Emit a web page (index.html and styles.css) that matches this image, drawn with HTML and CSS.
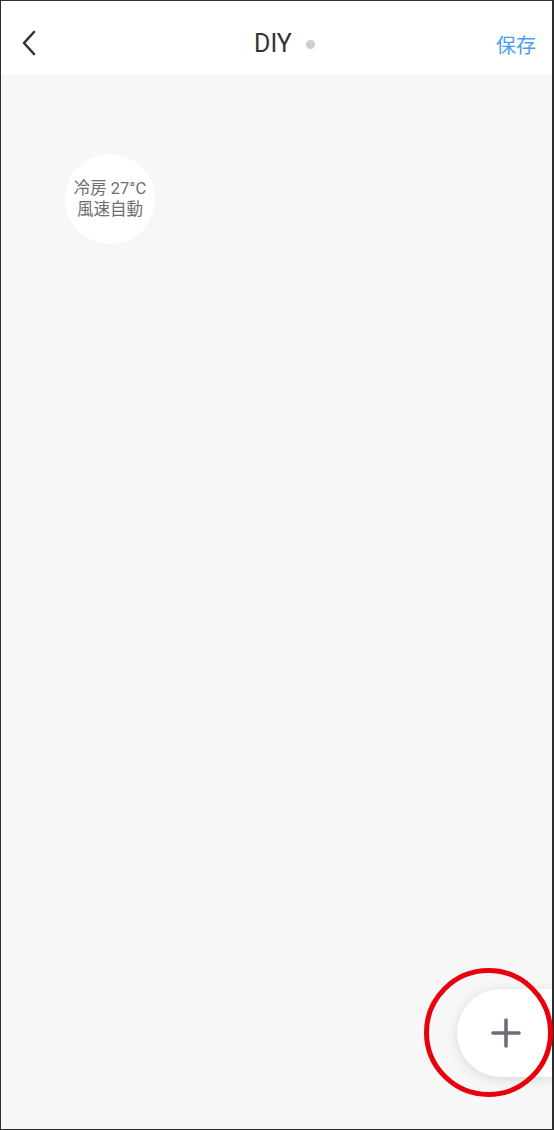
FILE: index.html
```html
<!DOCTYPE html>
<html>

<head>
    <title>DIY</title>
    <link rel="stylesheet" href="styles.css">
</head>

<body>
    <div class="screen">
        <div class="nav-bar">
            <div class="nav-back">
                <svg width="16" height="26" viewBox="0 0 16 26">
                    <path d="M13 2 L3 13 L13 24" fill="none" stroke="#333" stroke-width="2.6" stroke-linecap="round" stroke-linejoin="round" />
                </svg>
            </div>
            <div class="nav-title">
                DIY <span class="status-dot"></span>
            </div>
            <div class="nav-save">保存</div>
        </div>

        <div class="canvas">
            <div class="chip">
                <span>冷房 27°C</span>
                <span>風速自動</span>
            </div>

            <div class="fab">
                <svg width="30" height="30" viewBox="0 0 30 30">
                    <path d="M15 2 V28 M2 15 H28" stroke="#6d6d79" stroke-width="3.6" stroke-linecap="round" />
                </svg>
            </div>
            <div class="highlight"></div>
        </div>
    </div>
</body>

</html>
```

FILE: styles.css
```css
* {
    box-sizing: border-box;
}

body {
    margin: 0;
    overflow: hidden;
    font-family: Roboto, "Noto Sans CJK JP", sans-serif;
}

.screen {
    width: 554px;
    height: 1130px;
    border: 1px solid #2e2e2e;
    border-right-width: 2px;
    display: flex;
    flex-direction: column;
    background: #f7f7f7;
}

.nav-bar {
    height: 74px;
    background: #fff;
    display: flex;
    align-items: center;
    justify-content: space-between;
    padding: 0 16px 0 20px;
    position: relative;
}

.nav-back {
    width: 20px;
    height: 26px;
    margin-top: 12px;
    margin-bottom: 2px;
    display: flex;
    align-items: center;
}

.nav-title {
    position: absolute;
    left: 253px;
    top: 28px;
    font-family: Roboto, "Noto Sans CJK JP", sans-serif;
    font-size: 25px;
    line-height: 30px;
    color: #333;
    display: flex;
    align-items: center;
    gap: 9px;
}

.status-dot {
    width: 9px;
    height: 9px;
    border-radius: 50%;
    background: #cfcfcf;
    display: inline-block;
    margin-left: 5px;
}

.nav-save {
    margin-top: 12px;
    font-size: 20px;
    color: #4a9ef0;
    font-family: "Noto Sans CJK JP", sans-serif;
}

.canvas {
    flex: 1;
    position: relative;
    padding: 79px 0 0 64px;
}

.chip {
    width: 90px;
    height: 90px;
    border-radius: 50%;
    background: #fff;
    display: flex;
    flex-direction: column;
    align-items: center;
    justify-content: center;
    font-size: 16.5px;
    line-height: 21px;
    color: #6e6e6e;
    font-family: Roboto, "Noto Sans CJK JP", sans-serif;
    white-space: nowrap;
}

.fab {
    position: absolute;
    right: 0;
    top: 914px;
    width: 95px;
    height: 88px;
    background: #fff;
    border-radius: 44px 0 0 44px;
    box-shadow: 0 2px 12px rgba(0, 0, 0, 0.13);
    display: flex;
    align-items: center;
    padding-left: 34px;
}

.highlight {
    position: absolute;
    left: 423px;
    top: 893px;
    width: 129px;
    height: 129px;
    border: 5px solid #e8000b;
    border-radius: 50%;
}
```
